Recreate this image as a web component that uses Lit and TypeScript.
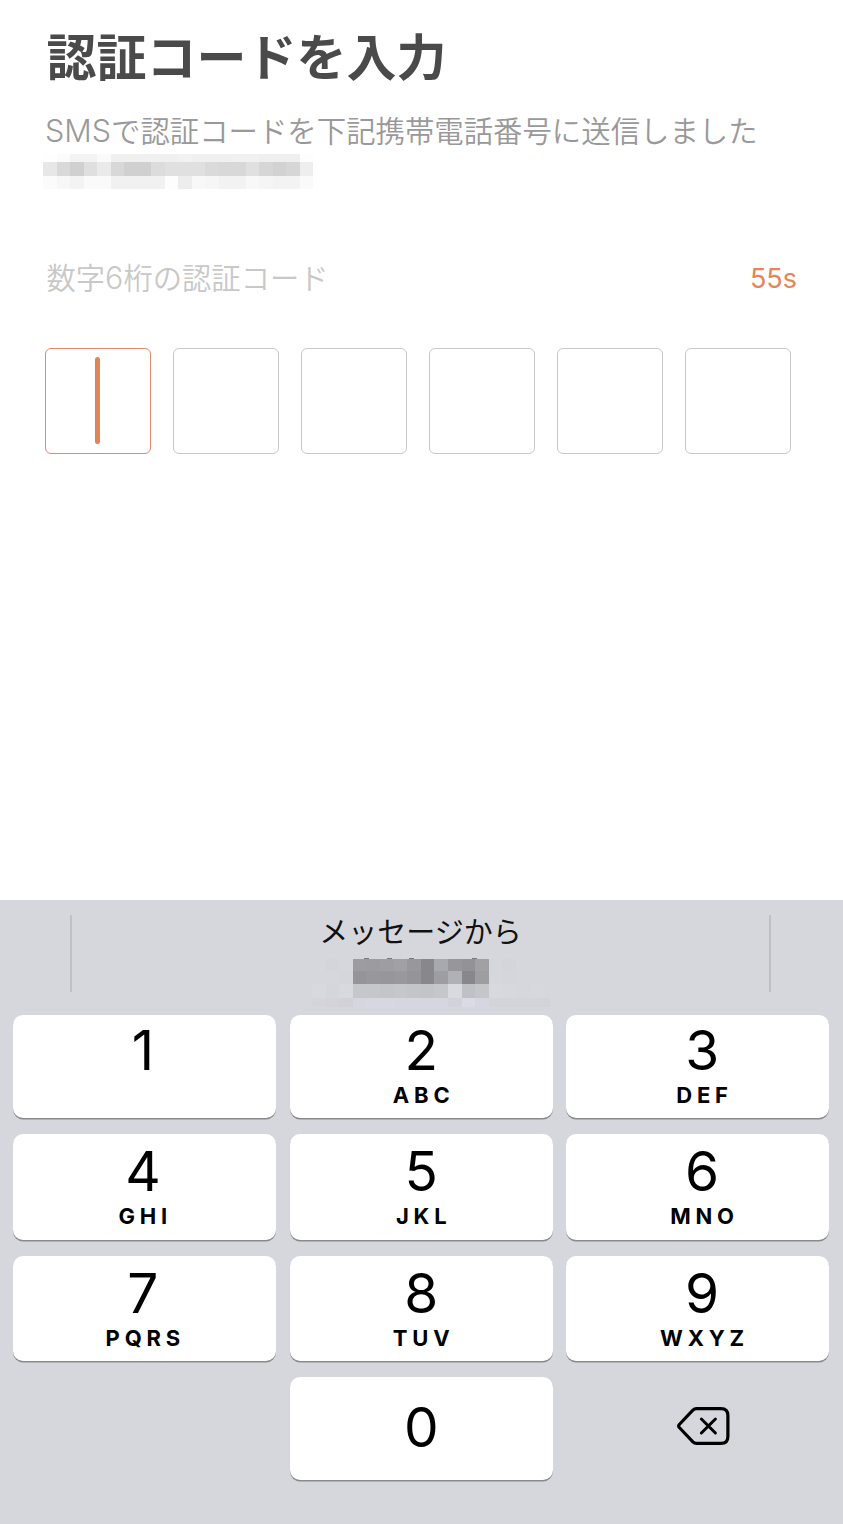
import { LitElement, html, svg, css } from "lit";
import { customElement, property } from "lit/decorators.js";

interface Key {
  digit: string;
  letters: string;
}

const KEY_ROWS: Key[][] = [
  [
    { digit: "1", letters: "" },
    { digit: "2", letters: "ABC" },
    { digit: "3", letters: "DEF" },
  ],
  [
    { digit: "4", letters: "GHI" },
    { digit: "5", letters: "JKL" },
    { digit: "6", letters: "MNO" },
  ],
  [
    { digit: "7", letters: "PQRS" },
    { digit: "8", letters: "TUV" },
    { digit: "9", letters: "WXYZ" },
  ],
];

interface MosaicRow {
  top: number;
  height: number;
  colors: string[];
}

const grays = (list: string) => list.split(" ").map((v) => `#${v}${v}${v}`);
const hexes = (list: string) => list.split(" ").map((v) => `#${v}`);

// Pixelated phone number under the subtitle.
const PHONE_ROWS: MosaicRow[] = [
  { top: 0, height: 8, colors: grays("fe fb f3 f3 fa f0 f0 f0 f0 f0 f2 f0 f0 f0 f1 f1 ef ef ef fd") },
  { top: 8, height: 13.5, colors: grays("e7 d9 d0 df ea d8 d0 d0 dc e0 e0 e0 da d8 d8 e0 d6 d2 d6 ee") },
  { top: 21.5, height: 13.5, colors: grays("fb f7 f3 fa fa f1 f1 f1 f1 fd ed f8 f6 f2 f2 f8 f5 f3 f3 fa") },
];

// Pixelated code suggestion in the keyboard bar.
const CODE_ROWS: MosaicRow[] = [
  { top: 2, height: 12, colors: hexes("d6d7dc d4d5da d6d7dc 9c9ca1 9b9ba0 9d9da2 a0a0a5 97979c 87878c a8a9ae 96969b 929297 a0a0a5 d6d7dc d4d5da d6d7dc d6d7dc d6d7dc") },
  { top: 14, height: 13.4, colors: hexes("d6d7dc d6d7dc d5d6db 949499 97979c 96969b 98989d 949499 87878c 9d9da2 b0b1b6 87878c 9d9da2 d6d7dc d5d6db d6d7dc d6d7dc d6d7dc") },
  { top: 27.4, height: 13.4, colors: hexes("d8d9de d5d6db d8d9de c6c7cb c6c7cb c4c5c9 c6c7cb c4c5c9 c3c4c8 c6c7cb d9dae0 c0c1c6 c5c6ca d8d9de d7d8dd d6d7dc d7d8dd d6d7dc") },
  { top: 40.8, height: 9.2, colors: hexes("d5d4dc d3d3d9 d2d1d8 d6d6e0 d7d7e1 d7d7e1 d6d6e0 d6d6e0 d6d6e0 d6d6e0 d2d2da dadbe4 d6d6e0 d3d3da d3d3da d3d3da d3d3da d2d2d9") },
];

@customElement("pixel-mosaic")
export class PixelMosaic extends LitElement {
  @property({ attribute: false }) rows: MosaicRow[] = [];
  @property({ type: Number }) cell = 13.5;
  @property({ type: Number }) w = 0;
  @property({ type: Number }) h = 0;
  @property({ attribute: false }) specks: number[] = [];

  static styles = css`
    :host {
      display: block;
    }
    svg {
      display: block;
    }
  `;

  render() {
    return html`<svg width=${this.w} height=${this.h} viewBox="0 0 ${this.w} ${this.h}" aria-hidden="true">
      ${this.specks.map((x) => svg`<rect x=${x} y="1" width="5" height="1.2" fill="#77777c" />`)}
      ${this.rows.map((row) =>
        row.colors.map(
          (c, i) =>
            svg`<rect shape-rendering="crispEdges" x=${i * this.cell} y=${row.top} width=${this.cell} height=${row.height} fill=${c} />`
        )
      )}
    </svg>`;
  }
}

@customElement("number-key")
export class NumberKey extends LitElement {
  @property() digit = "";
  @property() letters = "";

  static styles = css`
    :host {
      display: flex;
      flex-direction: column;
      align-items: center;
      box-sizing: border-box;
      background: #fff;
      border-radius: 10px;
      box-shadow: 0 1.5px 0 #898a8e;
      color: #000;
      font-family: Inter, sans-serif;
    }
    .digit {
      font-size: 55px;
      line-height: 60px;
      height: 60px;
      font-weight: 400;
    }
    .letters {
      margin-top: 3px;
      font-size: 22px;
      line-height: 24px;
      font-weight: 650;
      letter-spacing: 4.8px;
      padding-left: 4.8px;
    }
  `;

  render() {
    return html`<span class="digit">${this.digit}</span>
      ${this.letters ? html`<span class="letters">${this.letters}</span>` : null}`;
  }
}

@customElement("number-pad")
export class NumberPad extends LitElement {
  static styles = css`
    :host {
      display: flex;
      flex-direction: column;
      box-sizing: border-box;
      height: 624px;
      background: #d6d7dc;
    }
    .bar {
      display: grid;
      grid-template-columns: 70px 2px 1fr 2px 72px;
      height: 115px;
      flex: none;
    }
    .rule {
      background: #c0c1c6;
      height: 77px;
      margin-top: 14.5px;
    }
    .rule.first {
      grid-column: 2;
    }
    .suggestion {
      display: flex;
      flex-direction: column;
      align-items: center;
    }
    .source {
      margin-top: 13px;
      height: 34px;
      line-height: 34px;
      font-family: "Noto Sans CJK JP", sans-serif;
      font-size: 29px;
      color: #111;
      white-space: nowrap;
    }
    .code {
      margin: 10px 0 0 20px;
    }
    .keys {
      display: grid;
      grid-template-columns: repeat(3, 263.2px);
      grid-template-rows: 103px 105.5px 105.5px 103px;
      column-gap: 13.2px;
      row-gap: 16px;
      padding-left: 13.3px;
    }
    number-key {
      padding-top: 5px;
    }
    .mid {
      padding-top: 7px;
    }
    .left {
      padding-right: 4px;
    }
    .right {
      padding-left: 9px;
    }
    .zero {
      grid-column: 2;
      padding-top: 20px;
    }
    .erase {
      display: flex;
      align-items: flex-start;
      padding: 28px 0 0 110px;
    }
  `;

  render() {
    const side = ["left", "", "right"];
    return html`
      <div class="bar">
        <div class="rule first"></div>
        <div class="suggestion">
          <div class="source">メッセージから</div>
          <pixel-mosaic
            class="code"
            .rows=${CODE_ROWS}
            .specks=${[52, 75, 97, 160]}
            .cell=${13.6}
            .w=${238}
            .h=${50}
          ></pixel-mosaic>
        </div>
        <div class="rule"></div>
      </div>
      <div class="keys">
        ${KEY_ROWS.map((row, r) =>
          row.map(
            (k, c) =>
              html`<number-key class="${r > 0 ? "mid" : ""} ${side[c]}" digit=${k.digit} letters=${k.letters}></number-key>`
          )
        )}
        <number-key class="zero" digit="0"></number-key>
        <div class="erase">
          <svg width="56" height="42" viewBox="0 0 56 42" fill="none" stroke="#000" stroke-linecap="round" stroke-linejoin="round">
            <path
              stroke-width="3.2"
              d="M20.5 3.7 H45 Q51.9 3.7 51.9 10.6 V31.4 Q51.9 38.3 45 38.3 H20.5 Q18.4 38.3 16.9 36.8 L3.3 22.5 Q2 21 3.3 19.5 L16.9 5.2 Q18.4 3.7 20.5 3.7 Z"
            />
            <path stroke-width="3" d="M25.4 14 L39.4 28 M39.4 14 L25.4 28" />
          </svg>
        </div>
      </div>
    `;
  }
}

@customElement("app-root")
export class AppRoot extends LitElement {
  static styles = css`
    :host {
      display: flex;
      flex-direction: column;
      width: 843px;
      height: 1524px;
      overflow: hidden;
      background: #fff;
      font-family: "Noto Sans CJK JP", sans-serif;
    }
    .content {
      flex: 1;
      box-sizing: border-box;
      padding: 19px 46px 0 45px;
    }
    h1 {
      margin: 0;
      height: 70px;
      line-height: 70px;
      padding-left: 1.5px;
      font-size: 50px;
      font-weight: 700;
      color: #4a4a4a;
      white-space: nowrap;
    }
    .lead {
      margin: 18px 0 0;
      height: 44px;
      line-height: 44px;
      font-size: 29.4px;
      font-weight: 350;
      color: #999;
      white-space: nowrap;
    }
    .latin {
      font-family: Inter, sans-serif;
      font-size: 30.5px;
      font-weight: 350;
    }
    .phone {
      margin: 3px 0 0 -2px;
    }
    .row {
      display: flex;
      justify-content: space-between;
      align-items: center;
      height: 44px;
      margin-top: 66px;
      padding-left: 1.5px;
    }
    .label {
      font-size: 29.3px;
      font-weight: 350;
      line-height: 44px;
      color: #c8c8c8;
      white-space: nowrap;
    }
    .timer {
      font-family: Inter, sans-serif;
      font-size: 27px;
      line-height: 44px;
      padding-top: 3px;
      color: #e8845a;
    }
    .boxes {
      display: flex;
      gap: 22px;
      margin-top: 49px;
    }
    .box {
      display: flex;
      justify-content: center;
      align-items: center;
      box-sizing: border-box;
      width: 106px;
      height: 106px;
      border: 1px solid #c8c8c8;
      border-radius: 6px;
    }
    .active {
      border-color: #e08c66;
    }
    .caret {
      width: 5px;
      height: 87px;
      margin: 0 1px 1px 0;
      border-radius: 2.5px;
      background: #e4835a;
    }
  `;

  render() {
    return html`
      <div class="content">
        <h1>認証コードを入力</h1>
        <p class="lead"><span class="latin">SMS</span>で認証コードを下記携帯電話番号に送信しました</p>
        <pixel-mosaic class="phone" .rows=${PHONE_ROWS} .cell=${13.5} .w=${270} .h=${35}></pixel-mosaic>
        <div class="row">
          <span class="label">数字<span class="latin">6</span>桁の認証コード</span>
          <span class="timer">55s</span>
        </div>
        <div class="boxes">
          ${[0, 1, 2, 3, 4, 5].map(
            (i) => html`<div class="box ${i === 0 ? "active" : ""}">${i === 0 ? html`<div class="caret"></div>` : null}</div>`
          )}
        </div>
      </div>
      <number-pad></number-pad>
    `;
  }
}
